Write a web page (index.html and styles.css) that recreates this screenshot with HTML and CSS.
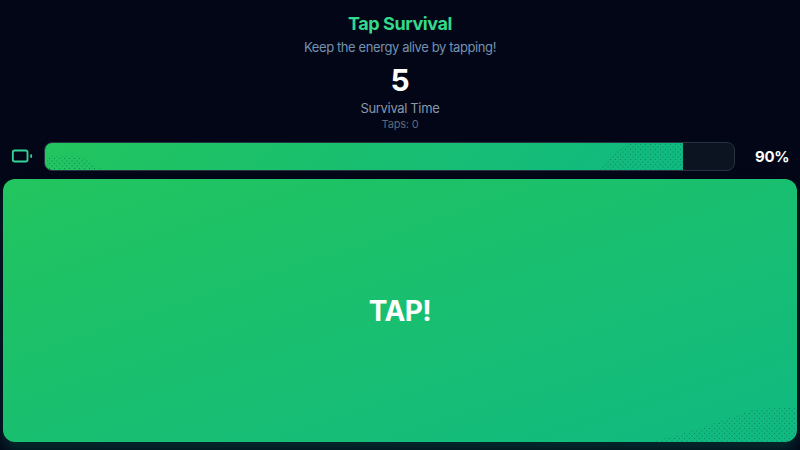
FILE: index.html
```html
<!DOCTYPE html>
<html lang="en">
<head>
<meta charset="utf-8">
<title>Tap Survival</title>
<link rel="stylesheet" href="styles.css">
</head>
<body>
<main class="game">
  <header class="head">
    <h1 class="title">Tap Survival</h1>
    <p class="subtitle">Keep the energy alive by tapping!</p>
    <div class="time">5</div>
    <div class="time-label">Survival Time</div>
    <div class="taps">Taps: 0</div>
  </header>
  <section class="energy">
    <svg class="battery" viewBox="0 0 24 24" fill="none" stroke="currentColor" stroke-width="2" stroke-linecap="round" stroke-linejoin="round"><rect x="2" y="6" width="16" height="12" rx="2"/><line x1="22" y1="11" x2="22" y2="13"/></svg>
    <div class="track"><div class="fill"><span class="dots dots-left"></span><span class="dots dots-right"></span></div></div>
    <span class="percent">90%</span>
  </section>
  <button class="tap" type="button"><span class="dots dots-corner"></span><span class="tap-text">TAP!</span></button>
</main>
</body>
</html>
```

FILE: styles.css
```css
* { box-sizing: border-box; }
html, body { margin: 0; height: 100%; }
body { background: #020617; font-family: Inter, "Liberation Sans", sans-serif; overflow: hidden; }
.game { height: 450px; display: flex; flex-direction: column; padding: 12px 3px 8px 3px; }
.head { display: flex; flex-direction: column; align-items: center; text-align: center; }
.title { margin: 0; font-size: 18px; line-height: 24px; font-weight: 700; letter-spacing: -.4px; color: #34d98a; }
.subtitle { margin: 1px 0 0; font-size: 13px; line-height: 20px; letter-spacing: -.4px; color: #7492b0; }
.time { margin-top: 5px; font-size: 30px; line-height: 36px; font-weight: 700; color: #fff; }
.time-label { font-size: 13px; line-height: 20px; letter-spacing: -.35px; color: #8a97aa; }
.taps { margin-top: -2px; font-size: 11px; line-height: 16px; letter-spacing: -.2px; color: #5e6877; }
.energy { display: flex; align-items: center; margin-top: 9px; padding: 0 8px; height: 30px; }
.battery { color: #34d399; flex: none; width: 22px; height: 22px; margin-right: 11px; }
.track { flex: 1; height: 29px; background: #0b1420; border: 1px solid #283341; border-radius: 8px; overflow: hidden; }
.fill { position: relative; width: 92.6%; height: 100%; background: linear-gradient(135deg, #22c55e, #10b981); }
.percent { width: 54px; text-align: right; font-size: 15px; font-weight: 700; letter-spacing: -.4px; color: #fff; }
.tap { position: relative; flex: 1; margin-top: 8px; border: 0; border-radius: 12px; background: linear-gradient(to bottom right, #22c55e, #10b981); box-shadow: 0 10px 15px rgba(16,185,129,.2); color: #fff; overflow: hidden; font-family: inherit; padding: 0; }
.tap-text { position: relative; font-size: 28px; line-height: 36px; font-weight: 700; letter-spacing: -.6px; }
.dots { position: absolute; bottom: 0; background-image: radial-gradient(circle at center, rgba(8,120,95,.8) 0 .7px, transparent .95px), radial-gradient(circle at center, rgba(8,120,95,.8) 0 .7px, transparent .95px); background-size: 5px 5px; background-position: 0 0, 2.5px 2.5px; }
.dots-left { left: 2px; width: 54px; height: 14px; clip-path: polygon(0 0, 62% 0, 100% 100%, 0 100%); }
.dots-right { right: 0; width: 85px; height: 28px; clip-path: polygon(22% 35%, 35% 8%, 100% 0, 100% 100%, 0 100%); }
.dots-corner { right: 0; width: 145px; height: 36px; clip-path: polygon(0 100%, 35% 60%, 70% 10%, 100% 0, 100% 100%); }
```
